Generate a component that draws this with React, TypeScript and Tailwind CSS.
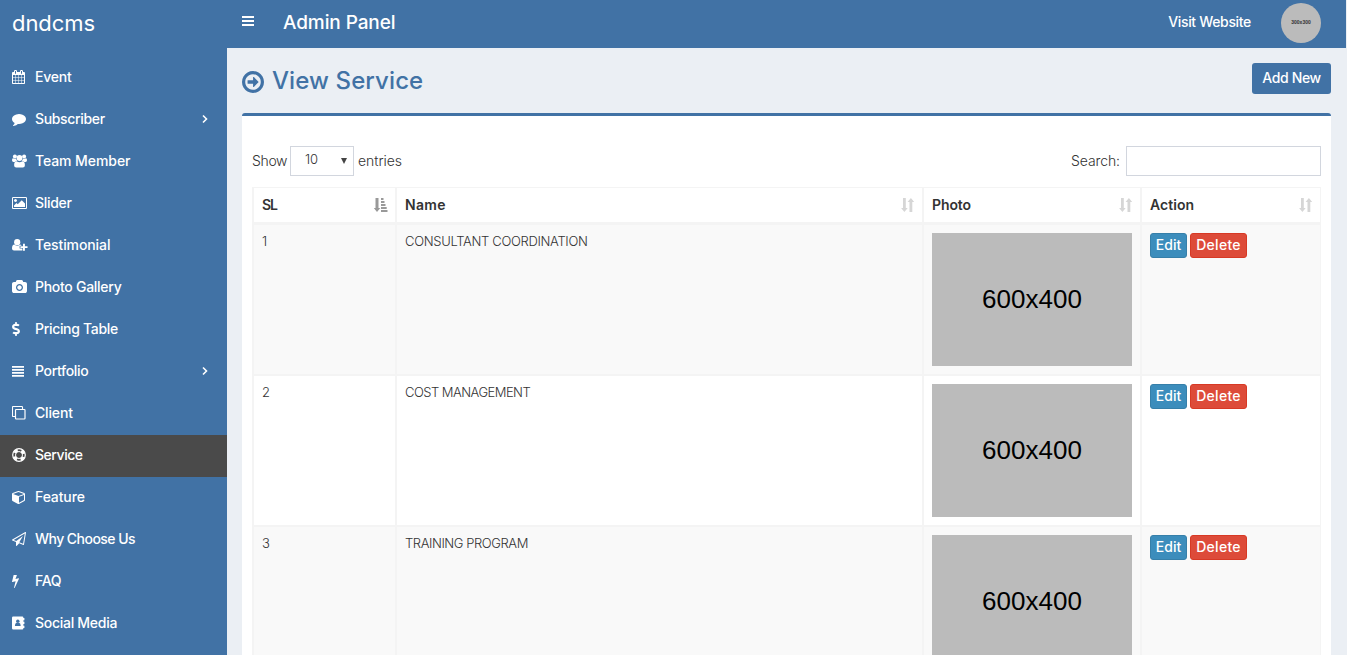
import React from "react";
import type { ReactNode } from "react";
import { FaDollarSign } from "react-icons/fa";

type IconProps = { d: string; box?: string; className?: string };

function Glyph({ d, box = "0 0 1792 1792", className = "h-[14px] w-[14px]" }: IconProps) {
  return (
    <svg viewBox={box} className={`${className} shrink-0`} fill="currentColor" fillRule="evenodd">
      <path d={d} />
    </svg>
  );
}

const calendar =
  "M192 1664h288v-288h-288v288zm352 0h320v-288h-320v288zm-352-352h288v-320h-288v320zm352 0h320v-320h-320v320zm-352-384h288v-288h-288v288zm736 736h320v-288h-320v288zm-384-736h320v-288h-320v288zm768 736h288v-288h-288v288zm-384-352h320v-320h-320v320zm-352-864v-288q0-13-9.5-22.5t-22.5-9.5h-64q-13 0-22.5 9.5t-9.5 22.5v288q0 13 9.5 22.5t22.5 9.5h64q13 0 22.5-9.5t9.5-22.5zm736 864h288v-320h-288v320zm-384-384h320v-288h-320v288zm384 0h288v-288h-288v288zm32-480v-288q0-13-9.5-22.5t-22.5-9.5h-64q-13 0-22.5 9.5t-9.5 22.5v288q0 13 9.5 22.5t22.5 9.5h64q13 0 22.5-9.5t9.5-22.5zm384-64v1280q0 52-38 90t-90 38h-1408q-52 0-90-38t-38-90v-1280q0-52 38-90t90-38h128v-96q0-66 47-113t113-47h64q66 0 113 47t47 113v96h384v-96q0-66 47-113t113-47h64q66 0 113 47t47 113v96h128q52 0 90 38t38 90z";
const comment =
  "M1792 896q0 174-120 321.5t-326 233-450 85.5q-70 0-145-8-198 175-460 242-49 14-114 22-17 2-30.5-9t-17.5-29v-1q-3-4-.5-12t2-10 4.5-9.5l6-9 7-8.5 8-9q7-8 31-34.5t34.5-38 31-39.5 32.5-51 27-59 26-76q-157-89-247.5-220t-90.5-281q0-130 71-248.5t191-204.5 286-136.5 348-50.5q244 0 450 85.5t326 233 120 321.5z";
const picture =
  "M576 576q0 80-56 136t-136 56-136-56-56-136 56-136 136-56 136 56 56 136zm1024 384v448h-1408v-192l320-320 160 160 512-512zm96-704h-1600q-13 0-22.5 9.5t-9.5 22.5v1216q0 13 9.5 22.5t22.5 9.5h1600q13 0 22.5-9.5t9.5-22.5v-1216q0-13-9.5-22.5t-22.5-9.5zm160 32v1216q0 66-47 113t-113 47h-1600q-66 0-113-47t-47-113v-1216q0-66 47-113t113-47h1600q66 0 113 47t47 113z";
const camera =
  "M896 672q119 0 203.5 84.5t84.5 203.5-84.5 203.5-203.5 84.5-203.5-84.5-84.5-203.5 84.5-203.5 203.5-84.5zm704-416q106 0 181 75t75 181v896q0 106-75 181t-181 75h-1408q-106 0-181-75t-75-181v-896q0-106 75-181t181-75h224l51-136q19-49 69.5-84.5t103.5-35.5h512q53 0 103.5 35.5t69.5 84.5l51 136h224zm-704 1152q185 0 316.5-131.5t131.5-316.5-131.5-316.5-316.5-131.5-316.5 131.5-131.5 316.5 131.5 316.5 316.5 131.5z";
const arrowCircle =
  "M1285 896q0 14-9 23l-320 320q-9 9-23 9-13 0-22.5-9.5t-9.5-22.5v-192h-352q-13 0-22.5-9.5t-9.5-22.5v-192q0-13 9.5-22.5t22.5-9.5h352v-192q0-14 9-23t23-9q12 0 24 10l319 319q9 9 9 23zm155 0q0-148-73-273t-198-198-273-73-273 73-198 198-73 273 73 273 198 198 273 73 273-73 198-198 73-273zm224 0q0 209-103 385.5t-279.5 279.5-385.5 103-385.5-103-279.5-279.5-103-385.5 103-385.5 279.5-279.5 385.5-103 385.5 103 279.5 279.5 103 385.5z";
const cube =
  "M896 1629l640-349v-636l-640 233v752zm-64-865l698-254-698-254-698 254zm832-252v768q0 35-18 65t-49 47l-704 384q-28 16-61 16t-61-16l-704-384q-31-17-49-47t-18-65v-768q0-40 23-73t61-47l704-256q22-8 44-8t44 8l704 256q38 14 61 47t23 73z";
const plane =
  "M1764 11q33 24 27 64l-256 1536q-5 29-32 45-14 8-31 8-11 0-24-5l-527-215-298 327q-18 21-47 21-14 0-23-4-19-7-30-23.5t-11-36.5v-452l-472-193q-37-14-40-55-3-39 32-59l1664-960q35-21 68 2zm-342 1499l221-1323-1434 827 336 137 863-639-478 797z";
const bolt =
  "M1333 566q18 20 7 44l-540 1157q-13 25-42 25-4 0-14-2-17-5-25.5-19t-4.5-30l197-808-406 101q-4 1-12 1-18 0-31-11-18-15-13-39l201-825q4-14 16-23t28-9h328q19 0 32 12.5t13 29.5q0 8-5 18l-171 463 396-98q8-2 12-2 19 0 34 15z";

function GroupIcon() {
  return (
    <svg viewBox="0 0 15 14" className="h-[14px] w-[15px]" fill="currentColor">
      <circle cx="2.9" cy="2.4" r="2" />
      <circle cx="12.1" cy="2.4" r="2" />
      <circle cx="7.5" cy="4" r="2.9" />
      <path d="M0 6.2Q0 4 1.2 4.2Q2.7 5.2 4.1 4.6Q4.3 6 5.1 6.9Q3.7 7 2.8 8H1.5Q0 7.900 0 6.200ZM15 6.200Q15 4 13.800 4.200Q12.300 5.200 10.900 4.600Q10.700 6 9.900 6.900Q11.300 7 12.200 8H13.500Q15 7.900 15 6.200Z" />
      <path d="M4.600 7.200Q7.500 9.200 10.400 7.200Q12.900 7.200 12.900 11.200Q12.900 13.500 10.800 13.500H4.200Q2.100 13.500 2.100 11.200Q2.100 7.200 4.600 7.200Z" />
    </svg>
  );
}

function UserPlusIcon() {
  return (
    <svg viewBox="0 0 16 14" className="h-[14px] w-[16px]" fill="currentColor">
      <circle cx="5.200" cy="4.200" r="3.100" />
      <path d="M2.500 6.500Q5.200 9 8 6.500Q8.700 6.500 9.300 7.100V7.800H7.600V10.600H10.400V12.500H2Q0 12.500 0 10.500Q0 6.500 2.500 6.500Z" />
      <path d="M11 5.800h1.900v2.500h2.600v1.800h-2.600v2.600H11v-2.600H8.400V8.300H11z" />
    </svg>
  );
}

function AlignIcon() {
  return (
    <svg viewBox="0 0 12 12" className="h-3 w-3" fill="currentColor">
      <path d="M0 1h12v1.800H0zM0 4h12v1.800H0zM0 7h12v1.800H0zM0 10h12v1.800H0z" />
    </svg>
  );
}

function CloneIcon() {
  return (
    <svg viewBox="0 0 14 14" className="h-[14px] w-[14px]" fill="none" stroke="currentColor">
      <rect x="3.500" y="3.500" width="9.500" height="9.500" rx="0.700" strokeWidth="1.200" />
      <path d="M3.500 10.500H1.300Q.5 10.500 .5 9.700V1.300Q.5.5 1.300.5H9.700Q10.500.5 10.500 1.300V3.500" strokeWidth="1.100" />
    </svg>
  );
}

function LifeRingIcon() {
  return (
    <svg viewBox="0 0 14 14" className="h-[14px] w-[14px]" fill="none" stroke="currentColor">
      <circle cx="7" cy="7" r="6.300" strokeWidth="1.200" />
      <circle cx="7" cy="7" r="3.500" strokeWidth="1" />
      <circle cx="7" cy="7" r="4.800" strokeWidth="3" strokeDasharray="3.770 3.770" strokeDashoffset="-1.885" />
    </svg>
  );
}

function AddressBookIcon() {
  return (
    <svg viewBox="0 0 14 14" className="h-[14px] w-[14px]">
      <path d="M1.200.5H10.200Q11.400.5 11.400 1.700V12.300Q11.400 13.500 10.200 13.500H1.200Q0 13.500 0 12.300V1.700Q0 .5 1.200.5ZM11.400 2h1v2.200h-1zM11.400 5.800h1v2.300h-1zM11.400 9.800h1V12h-1z" fill="currentColor" />
      <circle cx="5.800" cy="5.200" r="1.700" fill="#4172a5" />
      <path d="M4.500 6.700Q5.800 7.500 7.100 6.700Q8.700 6.900 8.700 9.900H2.900Q2.900 6.900 4.500 6.700Z" fill="#4172a5" />
    </svg>
  );
}

function Sort({ active = false }: { active?: boolean }) {
  return active ? (
    <svg viewBox="0 0 14 14" className="-mr-px -mt-px h-[14px] w-[14px] text-[#999999]" fill="currentColor">
      <path d="M1.500 0h3v10h1.800L3 14-.3 10h1.800zM7 0h2.500v2H7zM7 3h3.500v2H7zM7 6h4.500v2H7zM7 9h5.700v2H7zM7 12h6.500v2H7z" />
    </svg>
  ) : (
    <svg viewBox="0 0 14 14" className="-mr-px -mt-px h-[14px] w-[14px] text-[#d6d6d6]" fill="currentColor">
      <path d="M2 0h2.800v10h1.900L3.400 14 .1 10H2zM8.500 14h2.800V4h1.900L9.900 0 6.600 4h1.900z" />
    </svg>
  );
}

type Item = { label: string; icon: ReactNode; tracking?: string; expandable?: boolean; active?: boolean };

const items: Item[] = [
  { label: "Event", icon: <Glyph d={calendar} box="64 0 1792 1792" />, tracking: "tracking-[-0.2px]" },
  { label: "Subscriber", icon: <Glyph d={comment} />, tracking: "tracking-[-0.34px]", expandable: true },
  { label: "Team Member", icon: <GroupIcon />, tracking: "tracking-[-0.08px]" },
  { label: "Slider", icon: <Glyph d={picture} box="-64 0 1920 1792" className="h-[14px] w-[15px]" />, tracking: "tracking-[-0.3px]" },
  { label: "Testimonial", icon: <UserPlusIcon />, tracking: "tracking-[-0.1px]" },
  { label: "Photo Gallery", icon: <Glyph d={camera} box="-64 0 1920 1792" className="h-[14px] w-[15px]" />, tracking: "tracking-[-0.28px]" },
  { label: "Pricing Table", icon: <FaDollarSign className="h-[14px] w-2" />, tracking: "tracking-[-0.32px]" },
  { label: "Portfolio", icon: <AlignIcon />, tracking: "tracking-[-0.33px]", expandable: true },
  { label: "Client", icon: <CloneIcon />, tracking: "tracking-[-0.15px]" },
  { label: "Service", icon: <LifeRingIcon />, tracking: "tracking-[-0.45px]", active: true },
  { label: "Feature", icon: <Glyph d={cube} />, tracking: "tracking-[-0.12px]" },
  { label: "Why Choose Us", icon: <Glyph d={plane} />, tracking: "tracking-[-0.54px]" },
  { label: "FAQ", icon: <Glyph d={bolt} box="448 0 1792 1792" />, tracking: "tracking-[-0.3px]" },
  { label: "Social Media", icon: <AddressBookIcon />, tracking: "tracking-[-0.28px]" },
];

const columns = [
  { name: "SL", tracking: "tracking-[-1.2px]" },
  { name: "Name", tracking: "tracking-[0.3px]" },
  { name: "Photo", tracking: "tracking-[-0.1px]" },
  { name: "Action", tracking: "tracking-[0.05px]" },
];

const services = [
  { name: "CONSULTANT COORDINATION", tracking: "tracking-[-0.32px]" },
  { name: "COST MANAGEMENT", tracking: "tracking-[-0.53px]" },
  { name: "TRAINING PROGRAM", tracking: "tracking-[-0.43px]" },
];

const rowGrid = "grid grid-cols-[143px_527px_218px_179px]";

function Sidebar() {
  return (
    <aside className="flex w-[227px] shrink-0 flex-col bg-[#4172a5] text-white">
      <div className="h-[57px] shrink-0 pl-3 pt-[7px] text-[22px] leading-[32px] font-normal tracking-[-0.05px]">dndcms</div>
      <nav>
        {items.map((item) => (
          <a key={item.label} className={`flex h-[42px] items-center pl-3 pr-[19px] pb-[2px] ${item.active ? "bg-[#4a4a4a]" : ""}`}>
            <span className="flex w-[23px] shrink-0 items-center">{item.icon}</span>
            <span className={`flex-1 text-sm font-medium ${item.tracking ?? ""}`}>{item.label}</span>
            {item.expandable && (
              <svg viewBox="0 0 6 10" className="h-[10px] w-[6px]" fill="none" stroke="currentColor" strokeWidth="1.600">
                <path d="M1 1.500 4.500 5 1 8.500" />
              </svg>
            )}
          </a>
        ))}
      </nav>
    </aside>
  );
}

export default function App() {
  return (
    <div className="flex h-[655px] overflow-hidden bg-[#ebeff4] font-['Inter',sans-serif] text-[#333333]">
      <Sidebar />
      <div className="min-w-0 flex-1">
        <header className="mr-px flex h-12 items-center bg-[#4172a5] pb-[3px] pl-[15px] pr-[25px] text-white">
          <svg viewBox="0 0 12 10" className="-mt-[3px] h-[10px] w-3" fill="currentColor">
            <path d="M0 0h12v2H0zM0 4h12v2H0zM0 8h12v2H0z" />
          </svg>
          <h1 className="ml-[29px] flex-1 text-[19px] leading-7 font-medium tracking-[-0.1px]">Admin Panel</h1>
          <span className="pb-px text-sm font-medium tracking-[-0.33px]">Visit Website</span>
          <span className="ml-[30px] mt-px flex size-10 items-center justify-center rounded-full bg-[#bbbbbb] font-['Liberation_Sans',sans-serif] text-[5px] font-bold text-[#333333]">300x300</span>
        </header>

        <main className="pl-[15px] pr-4">
          <div className="flex h-[65px] items-start justify-between pt-[15px]">
            <h2 className="flex items-center text-2xl leading-[36px] font-medium tracking-[0.1px] text-[#4172a5]">
              <Glyph d={arrowCircle} box="128 128 1536 1536" className="mt-[2px] mr-[8px] h-[22px] w-[22px]" />
              View Service
            </h2>
            <button className="h-[31px] w-[79px] rounded-[3px] bg-[#4172a5] pb-px text-sm font-medium tracking-[-0.35px] text-white">Add New</button>
          </div>

          <section className="h-[600px] rounded-[3px] border-t-[3px] border-[#4172a5] bg-white px-[10px] pt-[30px]">
            <div className="flex h-[30px] items-center justify-between text-sm font-light">
              <div className="flex items-center">
                <span className="w-[38px] tracking-[-0.35px]">Show</span>
                <span className="mr-1 flex h-[30px] w-16 items-center justify-between border border-[#d2d6de] pl-[14px] pr-[6px] pb-[3px] text-[13px]">
                  10
                  <svg viewBox="0 0 6 6" className="mt-[3px] h-[6px] w-[6px]" fill="#444444"><path d="M0 0h6L3 6z" /></svg>
                </span>
                <span className="tracking-[-0.05px]">entries</span>
              </div>
              <label className="flex items-center">
                <span className="w-[55px] tracking-[-0.1px]">Search:</span>
                <input className="h-[30px] w-[195px] border border-[#d2d6de] outline-none" />
              </label>
            </div>

            <div className="mt-[11px] border-t border-l-2 border-[#f4f4f4]">
              <div className={rowGrid}>
                {columns.map((column, i) => (
                  <div key={column.name} className="flex h-[37px] items-center justify-between border-r-2 border-b-[3px] border-[#f4f4f4] px-2 text-sm font-semibold last:border-r">
                    <span className={`pb-px ${column.tracking}`}>{column.name}</span>
                    <Sort active={i === 0} />
                  </div>
                ))}
              </div>
              {services.map((service, i) => (
                <div key={service.name} className={`${rowGrid} h-[151px] text-[13px] leading-[16px] font-light odd:bg-white even:bg-[#f9f9f9]`}>
                  <div className="border-r-2 border-b-2 border-[#f4f4f4] p-2">{i + 1}</div>
                  <div className={`border-r-2 border-b-2 border-[#f4f4f4] p-2 ${service.tracking}`}>{service.name}</div>
                  <div className="border-r-2 border-b-2 border-[#f4f4f4] p-2">
                    <div className="flex h-[133px] w-[200px] items-center justify-center bg-[#bbbbbb] pb-px font-['Liberation_Sans',sans-serif] text-[26px] leading-[30px] font-normal text-black">600x400</div>
                  </div>
                  <div className="flex items-start gap-[3px] border-r border-b-2 border-[#f4f4f4] p-2 text-sm font-medium text-white">
                    <button className="h-[25px] w-[37px] rounded-[3px] border border-[#367fa9] bg-[#3c8dbc] pb-[2px] leading-none">Edit</button>
                    <button className="h-[25px] w-[57px] rounded-[3px] border border-[#d73925] bg-[#dd4b39] pb-[2px] leading-none tracking-[0.3px]">Delete</button>
                  </div>
                </div>
              ))}
            </div>
          </section>
        </main>
      </div>
    </div>
  );
}
